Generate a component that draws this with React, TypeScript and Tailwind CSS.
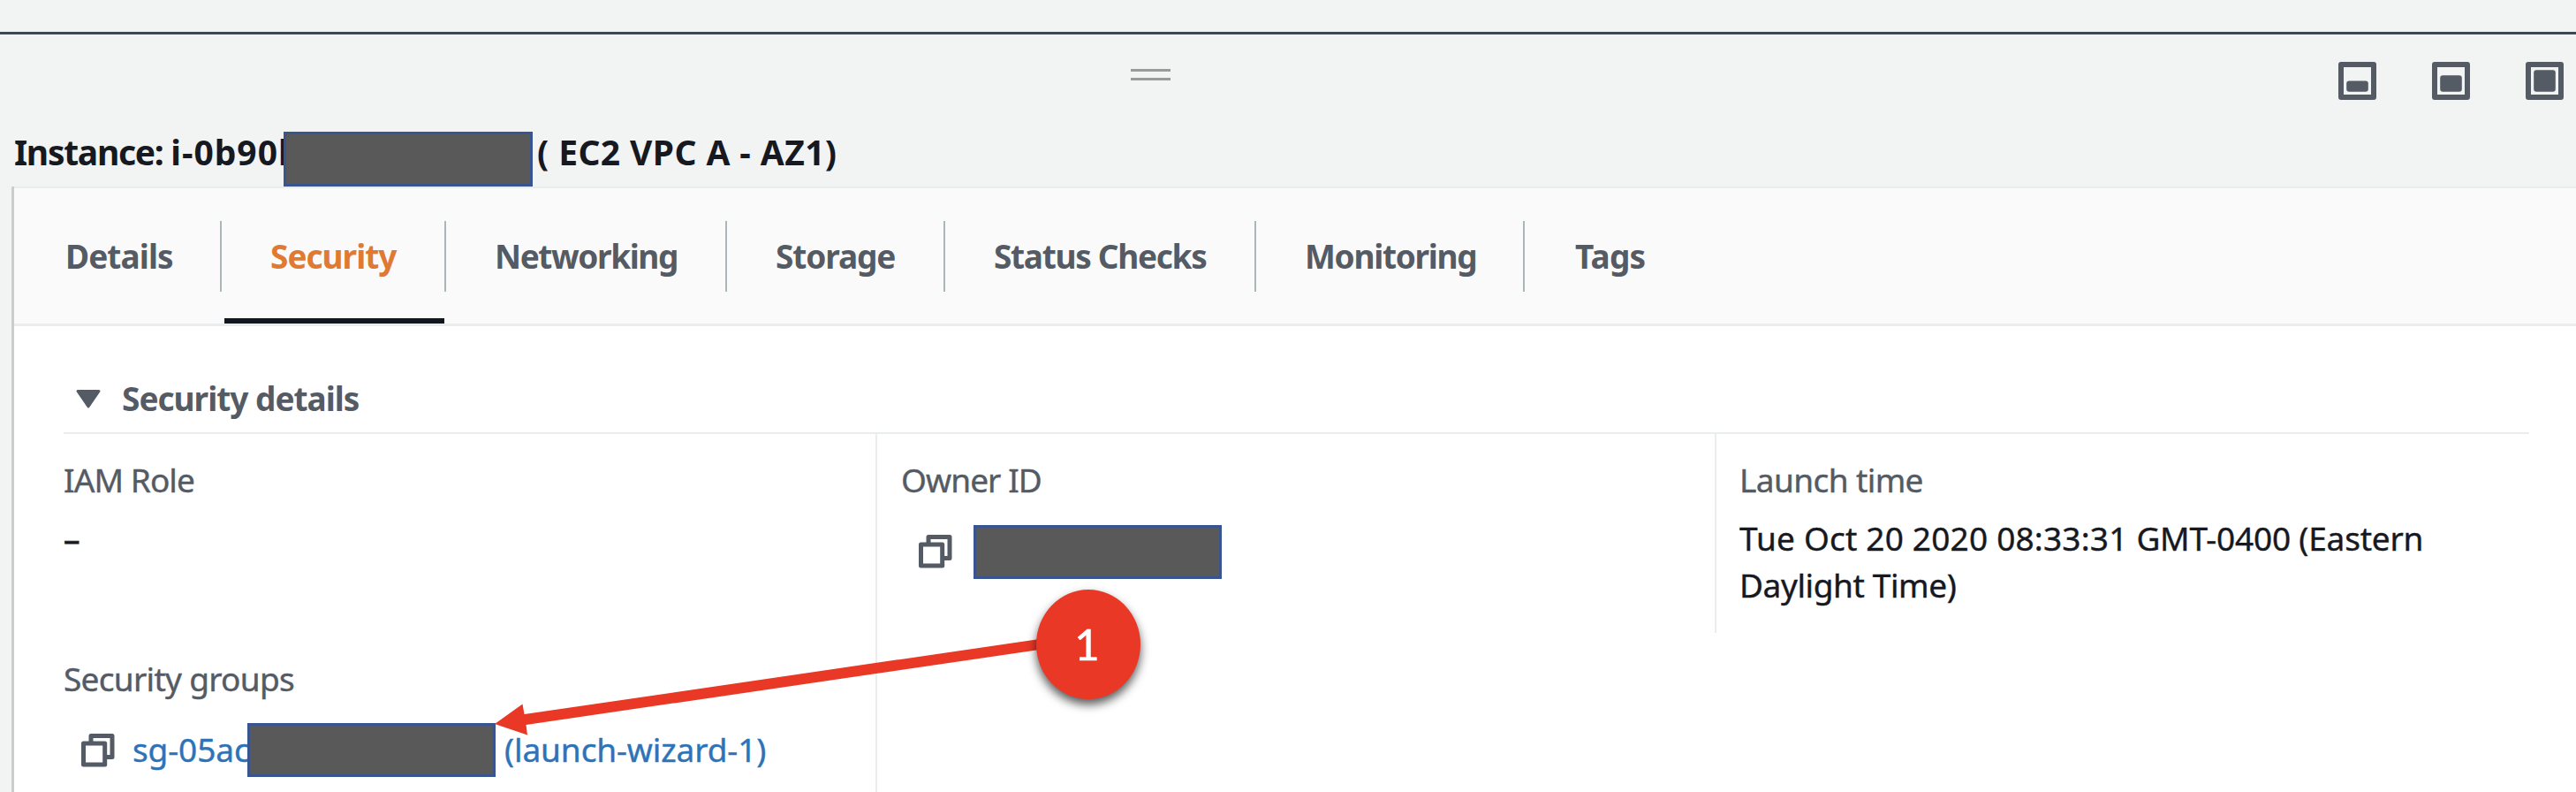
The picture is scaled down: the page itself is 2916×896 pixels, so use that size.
import React from "react";

function PanelSizeIcon({ fillTop }: { fillTop: number }) {
  return (
    <svg width="43" height="43" viewBox="0 0 43 43" fill="none">
      <rect x="3" y="3" width="37" height="37" stroke="#545b64" strokeWidth="6" strokeLinejoin="round" />
      <rect x="9.2" y={fillTop} width="24.6" height={33.8 - fillTop} rx="3" fill="#545b64" />
    </svg>
  );
}

function CopyIcon() {
  return (
    <svg width="38" height="38" viewBox="0 0 38 38" fill="none" className="shrink-0">
      <path d="M11 9V2.5H35V26.5H29" stroke="#545b64" strokeWidth="5" strokeLinejoin="round" />
      <rect x="2.5" y="11" width="24.2" height="24" stroke="#545b64" strokeWidth="5" strokeLinejoin="round" />
    </svg>
  );
}

const tabs = [
  { label: "Details", width: "w-[235px]", pad: "pl-[58px]", text: "tracking-[-0.9px]", divider: true },
  { label: "Security", width: "w-[254px]", pad: "pl-[55px]", text: "tracking-[-1px]", divider: true, active: true },
  { label: "Networking", width: "w-[318px]", pad: "pl-[55px]", text: "tracking-[-1.4px]", divider: true },
  { label: "Storage", width: "w-[247px]", pad: "pl-[55px]", text: "tracking-[-1.1px]", divider: true },
  { label: "Status Checks", width: "w-[352px]", pad: "pl-[55px]", text: "tracking-[-1.3px]", divider: true },
  { label: "Monitoring", width: "w-[304px]", pad: "pl-[55px]", text: "tracking-[-1.3px]", divider: true },
  { label: "Tags", width: "w-[200px]", pad: "pl-[57px]", text: "tracking-[-0.8px]", divider: false },
];

function Header() {
  return (
    <header className="flex h-[211px] flex-col">
      <div className="h-[39px] shrink-0 border-b-[3px] border-[#3d4853]" />
      <div className="grid h-[101px] grid-cols-[1fr_45px_1fr] pr-[14px]">
        <div />
        <div className="ml-[-149px] mt-[39px] h-[13px] w-[45px] border-y-[3px] border-[#9a9a9a]" />
        <div className="mt-[31px] flex justify-end gap-[63px]">
          <PanelSizeIcon fillTop={21.5} />
          <PanelSizeIcon fillTop={15.2} />
          <PanelSizeIcon fillTop={9.2} />
        </div>
      </div>
      <h1 className="flex h-[71px] items-start pl-[16px] text-[39px] font-bold leading-[53px] text-[#16191f]">
        <span className="mt-[5px] w-[305px] shrink-0 whitespace-nowrap">
          <span className="tracking-[-1.3px]">Instance: </span>
          <span className="tracking-[1px]">i-0b90b</span>
        </span>
        <span className="z-10 mt-[9px] h-[62px] w-[282px] shrink-0 border-[3px] border-[#385590] bg-[#595959]" />
        <span className="ml-[5px] mt-[5px] whitespace-nowrap tracking-[0.4px]">( EC2 VPC A - AZ1)</span>
      </h1>
    </header>
  );
}

function Tabs() {
  return (
    <nav className="flex h-[158px] border-b-[3px] border-t-2 border-[#eaeded] bg-[#fafafa]">
      {tabs.map((tab) => (
        <div key={tab.label} className={`flex h-full shrink-0 flex-col justify-between pt-[37px] ${tab.width}`}>
          <div
            className={`flex h-[80px] items-start pt-[13px] ${tab.pad} ${
              tab.divider ? "border-r-2 border-[#aab7b8]" : ""
            }`}
          >
            <span
              className={`whitespace-nowrap text-[37px] font-bold leading-[53px] ${tab.text} ${
                tab.active ? "text-[#e07a33]" : "text-[#545b64]"
              }`}
            >
              {tab.label}
            </span>
          </div>
          {tab.active && <div className="ml-[3px] h-[6px] w-[249px] bg-[#12161d]" />}
        </div>
      ))}
    </nav>
  );
}

function Redacted() {
  return <span className="z-10 h-[61px] w-[281px] shrink-0 border-[3px] border-[#385590] bg-[#595959]" />;
}

function Details() {
  return (
    <section className="flex flex-1 flex-col pl-[56px] pr-[53px]">
      <div className="flex h-[122px] items-start border-b-2 border-[#eaeded] pl-[13px] pt-[55px]">
        <svg width="30" height="23" viewBox="0 0 30 23" className="mt-[16px]">
          <path d="M3 2.5H27L15 20Z" fill="#545b64" stroke="#545b64" strokeWidth="3" strokeLinejoin="round" />
        </svg>
        <h2 className="ml-[23px] whitespace-nowrap text-[37px] font-bold leading-[53px] tracking-[-1px] text-[#545b64]">
          Security details
        </h2>
      </div>
      <div className="grid flex-1 grid-cols-[919px_950px_1fr] items-start text-[37px] leading-[53px] text-[#16191f] [-webkit-text-stroke:0.4px]">
        <div className="flex flex-col">
          <div className="mt-[25px] tracking-[-0.9px] text-[#545b64]">IAM Role</div>
          <div className="mt-[13px] [-webkit-text-stroke:0.8px]">–</div>
          <div className="mt-[106px] tracking-[-0.7px] text-[#545b64]">Security groups</div>
          <div className="mt-[24px] flex h-[61px] pl-[20px] text-[#2e73b8]">
            <div className="pt-[12px]">
              <CopyIcon />
            </div>
            <span className="ml-[20px] mt-[3px] w-[130px] shrink-0 whitespace-nowrap tracking-[-0.1px]">
              sg-05ac
            </span>
            <Redacted />
            <span className="ml-[10px] mt-[3px] whitespace-nowrap tracking-[-0.1px]">(launch-wizard-1)</span>
          </div>
        </div>
        <div className="flex h-full flex-col border-l-2 border-[#eaeded] pl-[27px]">
          <div className="mt-[25px] tracking-[-0.9px] text-[#545b64]">Owner ID</div>
          <div className="mt-[25px] flex h-[61px] pl-[20px]">
            <div className="mr-[24px] pt-[11px]">
              <CopyIcon />
            </div>
            <Redacted />
          </div>
        </div>
        <div className="flex h-[225px] flex-col border-l-2 border-[#eaeded] pl-[26px]">
          <div className="mt-[25px] tracking-[-0.6px] text-[#545b64]">Launch time</div>
          <div className="mt-[13px] w-[860px]">
            <span className="whitespace-nowrap">
              <span className="tracking-[0.2px]">Tue Oct 20 2020 08:33:31 </span>
              <span className="tracking-[-0.2px]">GMT-0400 (Eastern</span>
            </span>
            <br />
            <span className="tracking-[-0.4px]">Daylight Time)</span>
          </div>
        </div>
      </div>
    </section>
  );
}

function Callout() {
  return (
    <>
      <svg
        className="pointer-events-none absolute left-[550px] top-[700px] z-20"
        width="640"
        height="150"
        viewBox="550 700 640 150"
      >
        <path d="M560 819L591.5 796.5L593.5 808L1180 722.5V734.5L595.5 820L597 831.5Z" fill="#ea3826" />
      </svg>
      <div className="absolute left-[1173px] top-[667px] z-20 flex h-[124px] w-[118px] items-center justify-center rounded-[50%] bg-[#ea3826] pr-[3px] font-[Lato] text-[49px] text-white shadow-[0_6px_11px_rgba(0,0,0,0.65)] [-webkit-text-stroke:0.6px]">
        1
      </div>
    </>
  );
}

export default function App() {
  return (
    <div className="relative flex h-[896px] w-full flex-col overflow-hidden bg-[#f2f3f3] font-['Noto_Sans',sans-serif]">
      <Header />
      <main className="ml-[13px] flex flex-1 flex-col border-l-[3px] border-[#c9cdcf] bg-white">
        <Tabs />
        <Details />
      </main>
      <Callout />
    </div>
  );
}
